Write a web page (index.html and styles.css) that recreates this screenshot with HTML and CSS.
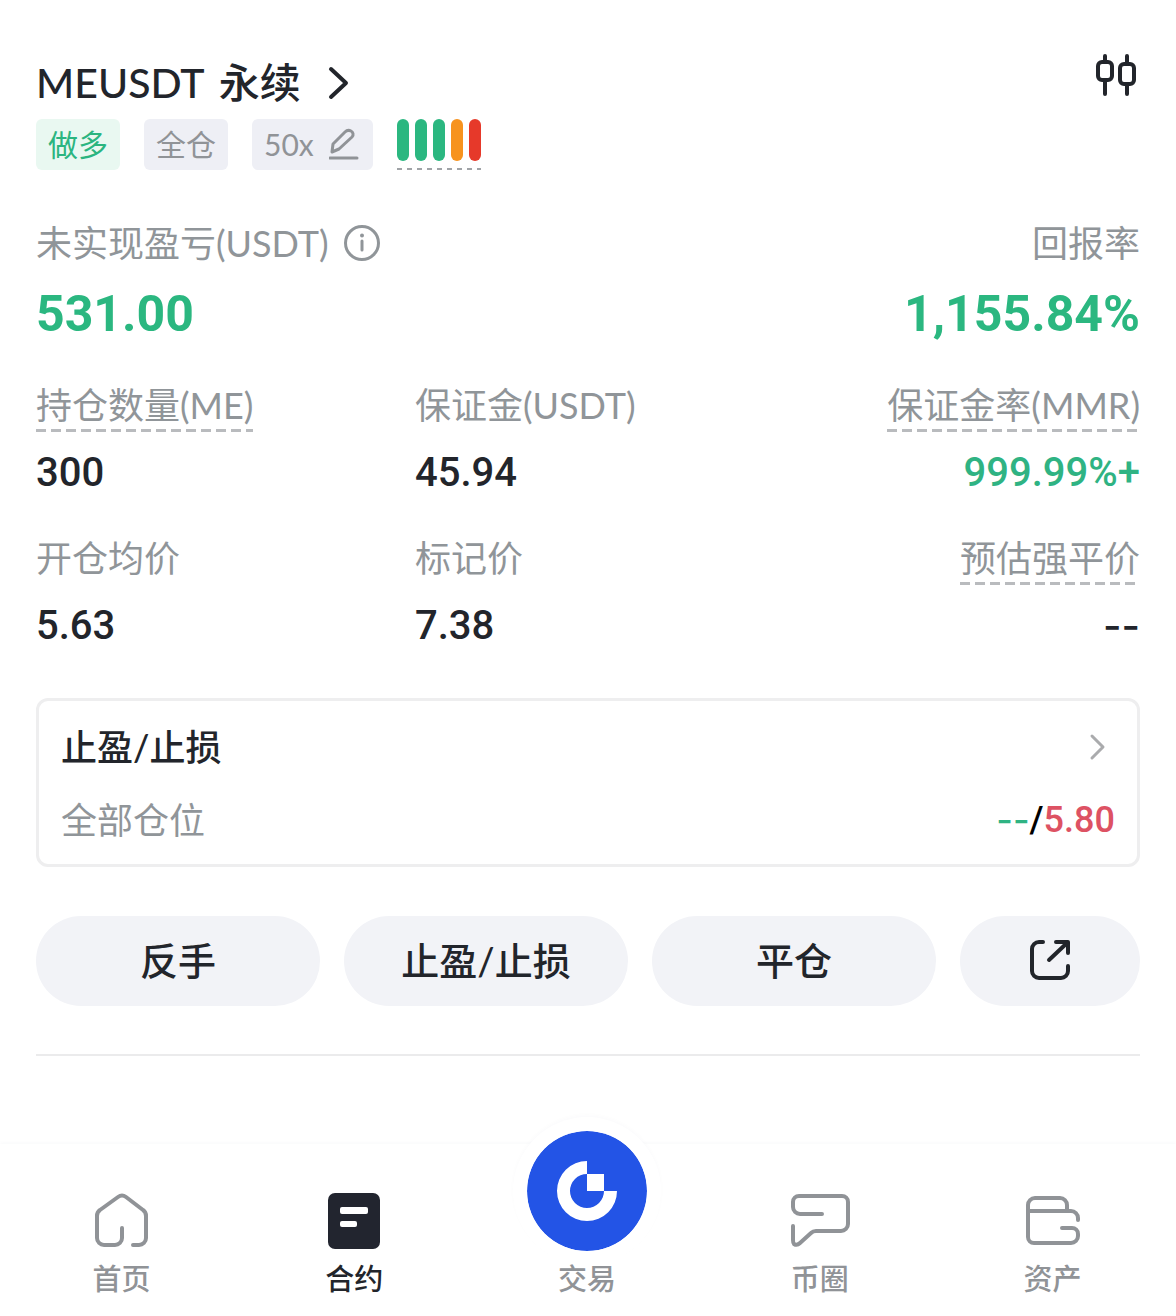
FILE: index.html
```html
<!DOCTYPE html>
<html lang="zh-CN">
<head>
<meta charset="utf-8">
<meta name="viewport" content="width=device-width, initial-scale=1">
<title>MEUSDT 永续</title>
<link rel="stylesheet" href="styles.css">
</head>
<body>
<main class="position">
  <header class="head">
    <h1 class="title"><a class="title-link" href="#contract"><span>MEUSDT</span> <span>永续</span>
      <svg class="title-arrow" width="24" height="36" viewBox="0 0 24 36" fill="none" stroke="currentColor" stroke-width="4" stroke-linecap="round" stroke-linejoin="round"><path d="M4 4l15 14L4 32"/></svg></a></h1>
    <button class="icon-button" type="button" aria-label="K线">
      <svg width="44" height="44" viewBox="0 0 44 44" fill="none" stroke="currentColor" stroke-width="4" stroke-linecap="round"><rect x="2" y="9" width="14" height="18" rx="4"/><path d="M9 3v6M9 28v13"/><rect x="24" y="11" width="14" height="20" rx="4"/><path d="M31 3v8M31 32v9"/></svg>
    </button>
  </header>

  <div class="tags">
    <span class="tag tag-long">做多</span>
    <span class="tag">全仓</span>
    <button class="tag tag-edit" type="button">50x
      <svg width="32" height="34" viewBox="0 0 32 34" fill="none" stroke="currentColor" stroke-width="3" stroke-linecap="round" stroke-linejoin="round"><path d="M1 31h27"/><path d="M3 25l1-8L16 5c2-2 4-2 6-1s3 4 1 6L10 22z"/></svg>
    </button>
    <div class="risk" role="img" aria-label="风险等级">
      <i class="bar"></i><i class="bar"></i><i class="bar"></i><i class="bar bar-orange"></i><i class="bar bar-red"></i>
    </div>
  </div>

  <section class="summary">
    <div>
      <div class="label label-info">未实现盈亏(USDT)
        <svg width="38" height="38" viewBox="0 0 38 38" fill="none" stroke="currentColor" stroke-width="3" stroke-linecap="round"><circle cx="19" cy="19" r="16.500"/><path d="M19 17v9"/><circle cx="19" cy="11.500" r="2" fill="currentColor" stroke="none"/></svg>
      </div>
      <div class="total">531.00</div>
    </div>
    <div class="end">
      <div class="label">回报率</div>
      <div class="total">1,155.84%</div>
    </div>
  </section>

  <section class="metrics">
    <div><div class="label dashed">持仓数量(ME)</div><div class="value">300</div></div>
    <div><div class="label">保证金(USDT)</div><div class="value">45.94</div></div>
    <div class="end"><div class="label dashed">保证金率(MMR)</div><div class="value green">999.99%+</div></div>
    <div><div class="label">开仓均价</div><div class="value">5.63</div></div>
    <div><div class="label">标记价</div><div class="value">7.38</div></div>
    <div class="end"><div class="label dashed">预估强平价</div><div class="value empty">--</div></div>
  </section>

  <a class="card" href="#tpsl">
    <span class="card-row card-title">止盈/止损
      <svg class="card-arrow" width="18" height="28" viewBox="0 0 18 28" fill="none" stroke="currentColor" stroke-width="3" stroke-linecap="round" stroke-linejoin="round"><path d="M3 3l11 11L3 25"/></svg>
    </span>
    <span class="card-row">全部仓位
      <span class="card-price"><span class="green empty">--</span><span>/</span><span class="red">5.80</span></span>
    </span>
  </a>

  <div class="actions">
    <button class="action" type="button">反手</button>
    <button class="action" type="button">止盈/止损</button>
    <button class="action" type="button">平仓</button>
    <button class="action" type="button" aria-label="分享">
      <svg width="42" height="42" viewBox="0 0 42 42" fill="none" stroke="currentColor" stroke-width="4" stroke-linecap="round" stroke-linejoin="round"><path d="M14 3H10a7 7 0 0 0-7 7v22a7 7 0 0 0 7 7h22a7 7 0 0 0 7-7v-5"/><path d="M27 3h12v11"/><path d="M38 4L20 21"/></svg>
    </button>
  </div>
  <hr class="divider">
</main>

<nav class="tabbar">
  <a class="tab" href="#home">
    <svg class="tab-icon" width="60" height="60" viewBox="0 0 60 60" fill="none" stroke="currentColor" stroke-width="4" stroke-linecap="round" stroke-linejoin="round"><path d="M31 37v10a7 7 0 0 1-7 7H13a7 7 0 0 1-7-7V25q0-4 3-6L27 6q4-3 8 0l17 13q3 2 3 6v22a7 7 0 0 1-7 7h-6"/></svg>
    首页</a>
  <a class="tab tab-active" href="#futures">
    <svg class="tab-icon" width="60" height="60" viewBox="0 0 60 60"><rect x="4" y="2" width="52" height="56" rx="7" fill="#22252f"/><rect x="16" y="16" width="28" height="7" rx="2" fill="#fff"/><rect x="16" y="30" width="17" height="6" rx="2" fill="#fff"/></svg>
    合约</a>
  <a class="tab tab-main" href="#trade">
    <svg class="tab-logo" width="120" height="120" viewBox="0 0 120 120"><circle cx="60" cy="60" r="60" fill="#2354e6"/><path d="M60 30a30 30 0 1 0 30 30H77a17 17 0 1 1-17-17z" fill="#fff"/><path d="M60 43h17v17H60z" fill="#fff"/></svg>
    交易</a>
  <a class="tab" href="#community">
    <svg class="tab-icon" width="60" height="60" viewBox="0 0 60 60" fill="none" stroke="currentColor" stroke-width="4" stroke-linecap="round" stroke-linejoin="round"><path d="M32 23H10a7 7 0 0 1-7-7v-5a6 6 0 0 1 6-6h43a6 6 0 0 1 6 6v22a7 7 0 0 1-7 7H26q-3 0-5 2L10 52q-3 3-6 1-1-1-1-4V35"/></svg>
    币圈</a>
  <a class="tab" href="#assets">
    <svg class="tab-icon" width="60" height="60" viewBox="0 0 60 60" fill="none" stroke="currentColor" stroke-width="4" stroke-linecap="round" stroke-linejoin="round"><path d="M5 20v-6a7 7 0 0 1 7-7h25a7 7 0 0 1 7 7v6"/><path d="M5 20h43a7 7 0 0 1 7 7v2M5 20v26a6 6 0 0 0 6 6h37a7 7 0 0 0 7-7v-2a6 6 0 0 0-6-6H39"/></svg>
    资产</a>
</nav>
</body>
</html>
```

FILE: styles.css
```css
* {
  box-sizing: border-box;
}

body {
  display: flex;
  flex-direction: column;
  min-height: 100vh;
  margin: 0;
  background: #fff;
  color: #22252b;
  font-family: Lato, "Noto Sans CJK SC", sans-serif;
  font-size: 36px;
  line-height: 48px;
}

a {
  color: inherit;
  text-decoration: none;
}

button {
  border: 0;
  padding: 0;
  background: none;
  color: inherit;
  font: inherit;
  cursor: pointer;
}

svg {
  display: block;
  flex: none;
}

.position {
  padding: 53px 36px 0;
}

.head {
  display: flex;
  justify-content: space-between;
  align-items: flex-start;
}

.title {
  margin: 0;
  font-size: 41px;
  font-weight: 500;
  line-height: 60px;
}

.title-link {
  display: flex;
  align-items: center;
  gap: 14px;
}

.title-arrow {
  margin-left: 12px;
}

.icon-button {
  color: #22252b;
}

.tags {
  display: flex;
  gap: 24px;
  margin-top: 6px;
}

.tag {
  display: flex;
  align-items: center;
  gap: 15px;
  height: 51px;
  padding: 0 12px 2px;
  border-radius: 6px;
  background: #eeeff5;
  color: #909397;
  font-size: 30px;
}

.tag-long {
  background: #e9f8f1;
  color: #2bb580;
}

.risk {
  display: flex;
  gap: 6px;
  padding-bottom: 9px;
  background: repeating-linear-gradient(to right, #a0a3a7 0 5px, transparent 5px 10px) bottom / 100% 2px no-repeat;
}

.bar {
  width: 12px;
  height: 42px;
  border-radius: 6px;
  background: #2bb780;
}

.bar-orange {
  background: #f7931e;
}

.bar-red {
  background: #e6392a;
}

.summary {
  display: flex;
  justify-content: space-between;
  margin-top: 49px;
}

.end {
  text-align: right;
}

.label {
  width: fit-content;
  padding-bottom: 3px;
  color: #909599;
}

.end .label {
  margin-left: auto;
}

.label-info {
  display: flex;
  align-items: center;
  gap: 14px;
}

.dashed {
  background: repeating-linear-gradient(to right, #b9bbbe 0 10px, transparent 10px 15px) bottom / 100% 3px no-repeat;
}

.total {
  margin-top: 14px;
  color: #2bb780;
  font-family: Roboto, "Noto Sans CJK SC", sans-serif;
  font-size: 50px;
  font-weight: 700;
  line-height: 60px;
}

.metrics {
  display: grid;
  grid-template-columns: repeat(3, 1fr);
  gap: 37px 33px;
  margin-top: 37px;
}

.value {
  margin-top: 17px;
  font-family: Roboto, "Noto Sans CJK SC", sans-serif;
  font-size: 40px;
  font-weight: 500;
}

.empty {
  font-family: Inter, sans-serif;
}

.green {
  color: #2fb383;
}

.red {
  color: #dd5263;
}

.card {
  display: flex;
  flex-direction: column;
  gap: 25px;
  margin-top: 48px;
  padding: 22px 22px 20px;
  border: 3px solid #eeeeef;
  border-radius: 12px;
  color: #909599;
}

.card-row {
  display: flex;
  justify-content: space-between;
  align-items: center;
}

.card-title {
  color: #22252b;
  font-weight: 500;
}

.card-arrow {
  margin-right: 8px;
  color: #aaabad;
}

.card-price {
  display: flex;
  color: #000;
  font-family: Roboto, "Noto Sans CJK SC", sans-serif;
  font-weight: 500;
}

.actions {
  display: grid;
  grid-template-columns: 71fr 71fr 71fr 45fr;
  gap: 24px;
  margin-top: 49px;
}

.action {
  display: flex;
  justify-content: center;
  align-items: center;
  height: 90px;
  padding-bottom: 2px;
  border-radius: 45px;
  background: #f2f3f7;
  font-size: 38px;
  font-weight: 500;
}

.divider {
  height: 2px;
  margin: 48px 0 88px;
  border: 0;
  background: #ebebec;
}

.tabbar {
  display: flex;
  margin-top: auto;
  padding: 47px 7px 17px 5px;
  box-shadow: 0 -1px 4px rgba(40, 60, 80, 0.03);
}

.tab {
  display: flex;
  flex: 1;
  flex-direction: column;
  align-items: center;
  gap: 8px;
  color: #909397;
  font-size: 29px;
  font-weight: 500;
  line-height: 40px;
}

.tab-active {
  color: #22252b;
}

.tab-logo {
  margin-top: -60px;
  border-radius: 50%;
  box-shadow: 0 0 0 14px #fff, 0 -2px 4px 14px rgba(40, 60, 80, 0.02);
}
```
